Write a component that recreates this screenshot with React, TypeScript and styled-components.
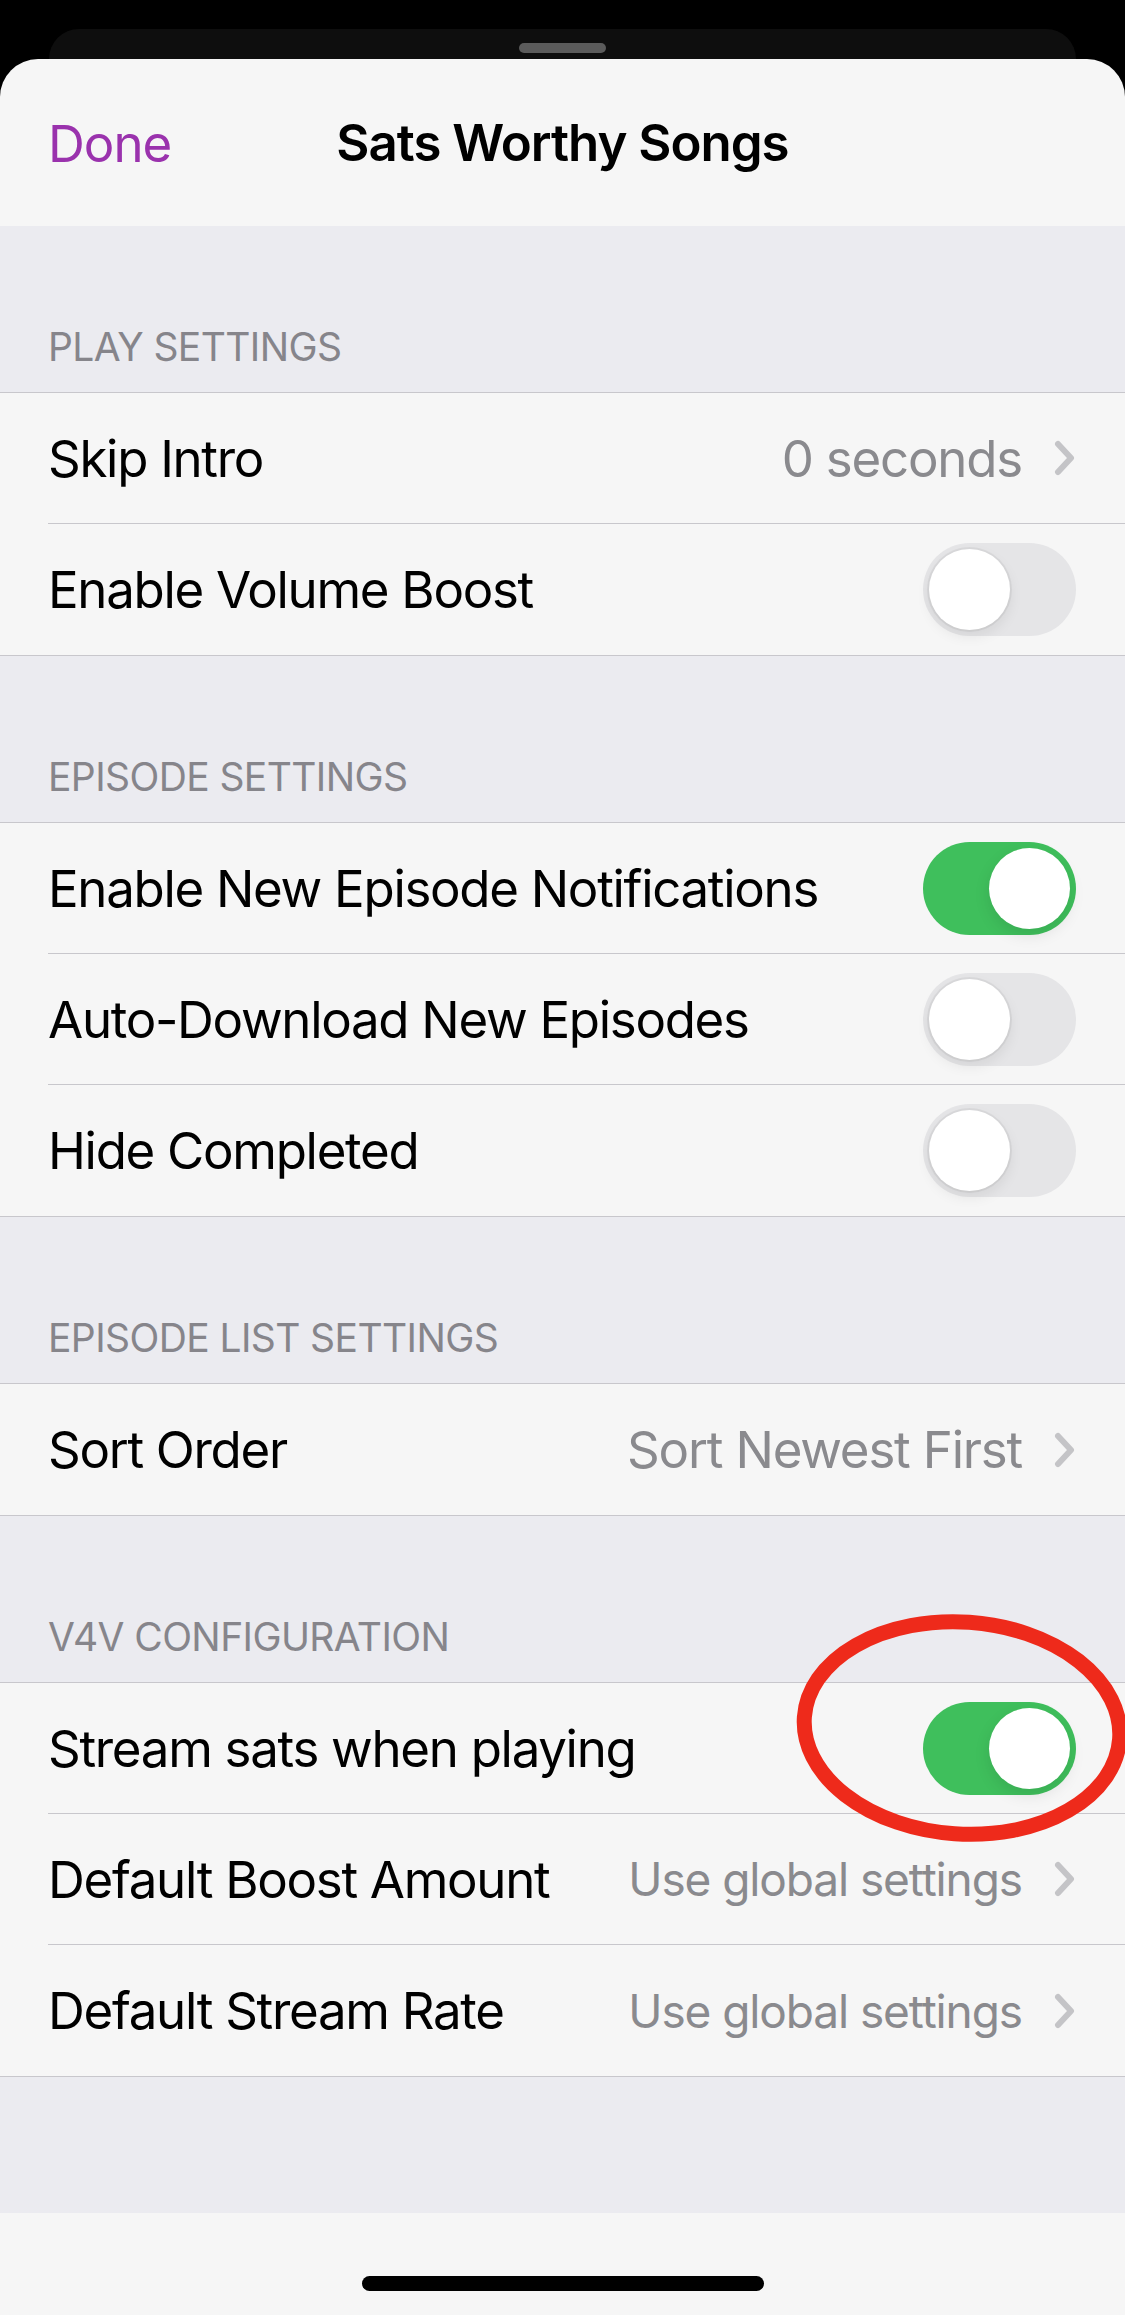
import React from 'react'
import styled, { createGlobalStyle } from 'styled-components'

const Global = createGlobalStyle`
  html, body {
    margin: 0;
    padding: 0;
    background: #000;
  }
  body {
    font-family: Inter, Roboto, "Noto Sans", sans-serif;
    -webkit-font-smoothing: antialiased;
  }
`

const Purple = '#9a32ad'
const Green = '#3fbf5c'
const Grouped = '#ebebf0'
const Cell = '#f6f6f6'
const Hairline = '#c8c7cc'
const Secondary = '#8a8a8e'

type RowData = {
  label: string
  value?: string
  compact?: boolean
  toggle?: boolean
}

type SectionData = {
  title: string
  rows: RowData[]
}

const sections: SectionData[] = [
  {
    title: 'Play Settings',
    rows: [
      { label: 'Skip Intro', value: '0 seconds' },
      { label: 'Enable Volume Boost', toggle: false },
    ],
  },
  {
    title: 'Episode Settings',
    rows: [
      { label: 'Enable New Episode Notifications', toggle: true },
      { label: 'Auto-Download New Episodes', toggle: false },
      { label: 'Hide Completed', toggle: false },
    ],
  },
  {
    title: 'Episode List Settings',
    rows: [{ label: 'Sort Order', value: 'Sort Newest First' }],
  },
  {
    title: 'V4V Configuration',
    rows: [
      { label: 'Stream sats when playing', toggle: true },
      // long detail text gets shrunk to fit, like the app does
      { label: 'Default Boost Amount', value: 'Use global settings', compact: true },
      { label: 'Default Stream Rate', value: 'Use global settings', compact: true },
    ],
  },
]

const Chevron = () => (
  <svg width="22" height="36" viewBox="0 0 22 36" fill="none">
    <path d="M4 4 L17 18 L4 32" stroke="#c4c4c7" strokeWidth="6" strokeLinecap="round" strokeLinejoin="round" />
  </svg>
)

const SettingsRow = ({ row, last }: { row: RowData; last: boolean }) => (
  <Row>
    <RowInner $last={last}>
      <Label>{row.label}</Label>
      {row.value !== undefined && (
        <Detail>
          <Value $compact={!!row.compact}>{row.value}</Value>
          <Chevron />
        </Detail>
      )}
      {row.toggle !== undefined && (
        <Switch $on={row.toggle} aria-checked={row.toggle} role="switch">
          <Knob $on={row.toggle} />
        </Switch>
      )}
    </RowInner>
  </Row>
)

const App = () => {
  return (
    <Page>
      <Global />
      <TopArea>
        <BackCard>
          <Grabber />
        </BackCard>
      </TopArea>
      <Sheet>
        <NavBar>
          <DoneButton>Done</DoneButton>
          <Title>Sats Worthy Songs</Title>
        </NavBar>
        <Content>
          {sections.map((s) => (
            <Section key={s.title}>
              <SectionHeader>{s.title}</SectionHeader>
              <Group>
                {s.rows.map((r, i) => (
                  <SettingsRow key={r.label} row={r} last={i === s.rows.length - 1} />
                ))}
              </Group>
            </Section>
          ))}
        </Content>
        <HomeArea>
          <HomeIndicator />
        </HomeArea>
      </Sheet>
      <Annotation width="360" height="250" viewBox="0 0 360 250">
        <ellipse
          cx="172"
          cy="121"
          rx="158"
          ry="106"
          fill="none"
          stroke="#ee2a1b"
          strokeWidth="15"
          transform="rotate(4 172 121)"
        />
      </Annotation>
    </Page>
  )
}

const Page = styled.div`
  position: relative;
  width: 1125px;
  height: 2315px;
  overflow: hidden;
  display: flex;
  flex-direction: column;
  background: #000;
`

const TopArea = styled.div`
  height: 59px;
  padding: 29px 49px 0;
  box-sizing: border-box;
  background: #000;
`

const BackCard = styled.div`
  height: 30px;
  background: #0e0e0e;
  border-radius: 30px 30px 0 0;
  display: flex;
  justify-content: center;
  padding-top: 14px;
  box-sizing: border-box;
`

const Grabber = styled.div`
  width: 87px;
  height: 10px;
  border-radius: 5px;
  background: #5b5b5b;
`

const Sheet = styled.div`
  flex: 1;
  display: flex;
  flex-direction: column;
  background: ${Cell};
  border-radius: 38px 38px 0 0;
  overflow: hidden;
`

const NavBar = styled.div`
  height: 167px;
  position: relative;
  display: flex;
  align-items: center;
  justify-content: center;
  padding: 0 50px;
  box-sizing: border-box;
`

const DoneButton = styled.div`
  position: absolute;
  left: 48px;
  top: 50%;
  transform: translateY(-50%);
  font-size: 51px;
  color: ${Purple};
  letter-spacing: -1px;
`

const Title = styled.div`
  font-size: 51px;
  font-weight: 600;
  color: #000;
  letter-spacing: -1px;
`

const Content = styled.div`
  flex: 1;
  background: ${Grouped};
`

const Section = styled.section`
  display: flex;
  flex-direction: column;
`

const SectionHeader = styled.div`
  height: 166px;
  box-sizing: border-box;
  display: flex;
  align-items: flex-end;
  padding: 0 48px 22px;
  font-size: 39px;
  line-height: 47px;
  color: #86858b;
  text-transform: uppercase;
  letter-spacing: -0.6px;
`

const Group = styled.div`
  background: ${Cell};
  border-top: 1px solid ${Hairline};
  border-bottom: 1px solid ${Hairline};
`

const Row = styled.div`
  padding-left: 48px;
`

const RowInner = styled.div<{ $last: boolean }>`
  height: 131px;
  box-sizing: border-box;
  display: flex;
  align-items: center;
  justify-content: space-between;
  padding-right: 49px;
  border-bottom: ${(p) => (p.$last ? 'none' : `1px solid ${Hairline}`)};
`

const Label = styled.span`
  font-size: 51px;
  color: #000;
  letter-spacing: -1.3px;
`

const Detail = styled.div`
  display: flex;
  align-items: center;
  gap: 32px;
`

const Value = styled.span<{ $compact: boolean }>`
  font-size: ${(p) => (p.$compact ? '46px' : '51px')};
  color: ${Secondary};
  letter-spacing: ${(p) => (p.$compact ? '-1.1px' : '-1.2px')};
`

const Switch = styled.div<{ $on: boolean }>`
  width: 153px;
  height: 93px;
  border-radius: 47px;
  background: ${(p) => (p.$on ? Green : '#e5e5e7')};
  display: flex;
  align-items: center;
  justify-content: ${(p) => (p.$on ? 'flex-end' : 'flex-start')};
  padding: 0 6px;
  box-sizing: border-box;
`

const Knob = styled.div<{ $on: boolean }>`
  width: 81px;
  height: 81px;
  border-radius: 50%;
  background: #fff;
  box-shadow: ${(p) =>
    p.$on
      ? '0 6px 16px rgba(0, 0, 0, 0.10)'
      : '0 0 0 2px rgba(0, 0, 0, 0.05), 0 6px 14px rgba(0, 0, 0, 0.08)'};
`

const HomeArea = styled.div`
  height: 102px;
  background: ${Cell};
  display: flex;
  justify-content: center;
  padding-top: 63px;
  box-sizing: border-box;
`

const HomeIndicator = styled.div`
  width: 402px;
  height: 15px;
  border-radius: 8px;
  background: #000;
`

const Annotation = styled.svg`
  position: absolute;
  left: 790px;
  top: 1607px;
  pointer-events: none;
`

export default App
